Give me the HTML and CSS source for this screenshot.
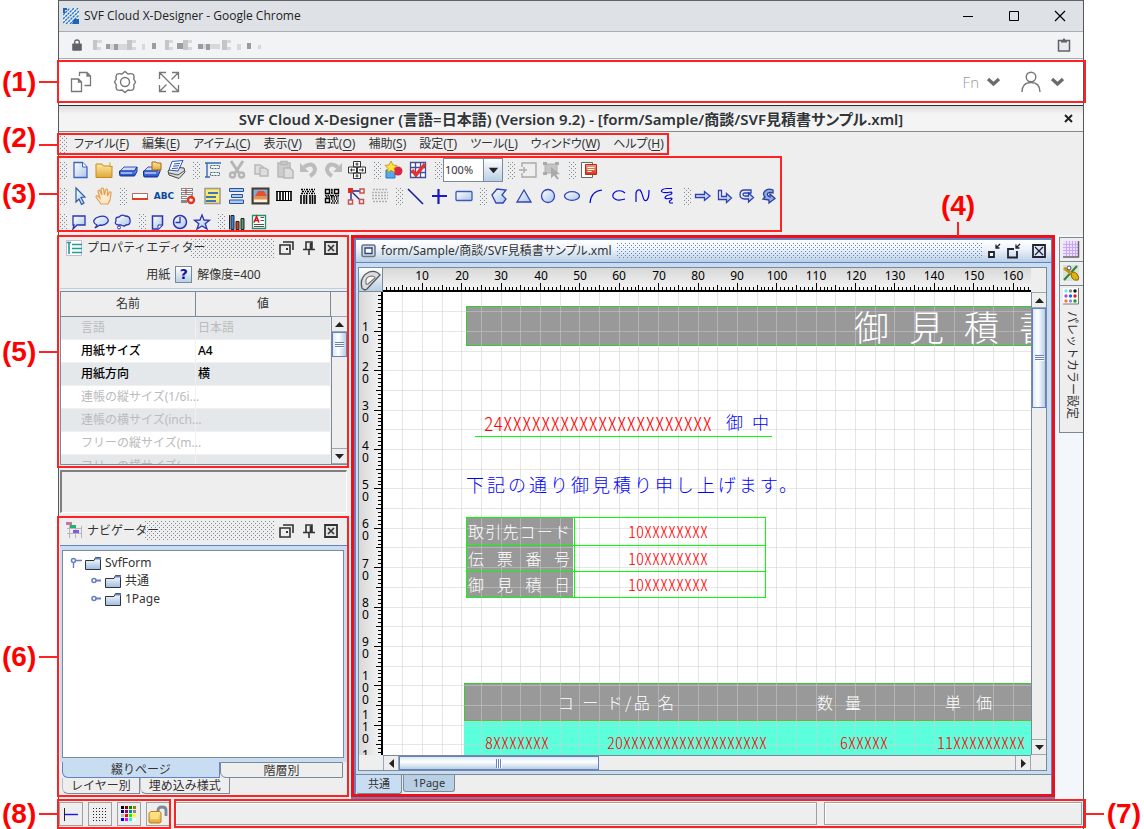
FILE: index.html
```html
<!DOCTYPE html>
<html lang="ja">
<head>
<meta charset="utf-8">
<title>SVF Cloud X-Designer</title>
<link rel="stylesheet" href="styles.css">
</head>
<body>
<svg class="defs" width="0" height="0" aria-hidden="true">
  <defs>
    <linearGradient id="gBlue" x1="0" y1="0" x2="1" y2="1"><stop offset="0" stop-color="#fff"/><stop offset="1" stop-color="#a9c6ea"/></linearGradient>
    <linearGradient id="gGold" x1="0" y1="0" x2="0" y2="1"><stop offset="0" stop-color="#ffe9a0"/><stop offset="1" stop-color="#e0a83a"/></linearGradient>
    <linearGradient id="gDisk" x1="0" y1="0" x2="0" y2="1"><stop offset="0" stop-color="#9ec2ff"/><stop offset="1" stop-color="#1d49c4"/></linearGradient>
    <linearGradient id="gRed" x1="0" y1="0" x2="0" y2="1"><stop offset="0" stop-color="#f79a7c"/><stop offset="1" stop-color="#cf3418"/></linearGradient>
    <linearGradient id="gFolder" x1="0" y1="0" x2="0" y2="1"><stop offset="0" stop-color="#fff"/><stop offset="1" stop-color="#9dbde0"/></linearGradient>
    <symbol id="folder" viewBox="0 0 16 13"><path d="M.5 3.500h8.500l1.500-3h5v12h-15z" fill="url(#gFolder)" stroke="#333"/><path d="M9.500 2.500l1.500-2h5v2z" fill="#6382bf"/></symbol>
    <symbol id="float" viewBox="0 0 15 14"><path d="M1 4h10v9H1zM4 1h10v8" fill="none" stroke="#333" stroke-width="1.600"/><path d="M7 7h2v2H7z" fill="#333"/></symbol>
    <symbol id="pin" viewBox="0 0 12 14"><path d="M3 8V1h6v7M0 8.500h12M6 9v5M7.500 2v6" fill="none" stroke="#333" stroke-width="1.600"/></symbol>
    <symbol id="shut" viewBox="0 0 14 14"><path d="M1 1h12v12H1z" fill="#e4e4e4" stroke="#333" stroke-width="1.800"/><path d="M4 4l6 6M10 4l-6 6" stroke="#333" stroke-width="1.600"/></symbol>
  </defs>
</svg>

<div class="figure">
<div class="window">

  <div class="titlebar">
    <svg width="16" height="16" viewBox="0 0 16 16"><path fill="#e8f0f8" d="M0 0h16v16H0z"/><path stroke="#2f74bd" stroke-width="1.400" stroke-dasharray="2.500 .7" d="M0 3L3 0M0 7L7 0M0 11L11 0M0 15L15 0M3 16L16 3M7 16l9-9M11 16l5-5"/><path fill="#2065b5" d="M0 0h4v2H2v3H0zM11 11h5v5h-7z"/></svg>
    <span class="titlebar-text">SVF Cloud X-Designer - Google Chrome</span>
    <button aria-label="最小化"><svg width="12" height="12"><path d="M1 6.500h10" stroke="#000"/></svg></button>
    <button aria-label="最大化"><svg width="12" height="12"><path d="M1.500 1.500h9v9h-9z" fill="none" stroke="#000"/></svg></button>
    <button aria-label="閉じる"><svg width="12" height="12"><path d="M1 1l10 10M11 1L1 11" stroke="#000" stroke-width="1.200"/></svg></button>
  </div>

  <div class="address">
    <svg width="10" height="12" viewBox="0 0 10 12"><path fill="#5f6368" d="M1 4.500h8q.8 0 .8.800V11q0 .8-.8.800H1q-.8 0-.8-.8V5.300q0-.8.800-.8z"/><path d="M2.700 5V3q0-2 2.300-2t2.300 2v2" fill="none" stroke="#5f6368" stroke-width="1.300"/></svg>
    <svg class="mosaic" width="170" height="12" viewBox="0 0 170 12"><g fill="#c4c6c8"><path d="M0 1h4v10H0zM34 1h5v10h-5zM72 1h4v10h-4zM90 1h5v10h-5zM129 1h5v10h-5z"/></g><g fill="#9a9da0"><path d="M13 5h4v5h-4zM21 5h4v6h-4zM59 4h4v6h-4zM84 4h6v6h-6zM105 5h5v5h-5zM113 5h4v6h-4zM154 4h4v6h-4z"/></g><g fill="#d6d8da"><path d="M4 1h5v3H4zM4 8h4v3H4zM17 5h4v6h-4zM25 5h9v6h-9zM39 1h4v3h-4zM39 8h4v3h-4zM49 5h3v6h-3zM76 1h4v3h-4zM76 8h4v3h-4zM95 1h4v3h-4zM95 8h4v3h-4zM110 5h3v5h-3zM117 5h10v5h-10zM134 1h4v3h-4zM134 8h4v3h-4zM144 5h4v6h-4zM165 6h3v4h-3z"/></g></svg>
    <svg class="address-end" width="14" height="14" viewBox="0 0 14 14"><path d="M1.500 2.500h11v10.500h-11z" fill="#e8eaeb" stroke="#5f6368" stroke-width="1.500"/><path fill="#5f6368" d="M4 2h1.700q.3-1.700 1.300-1.700T8.300 2H10v2.500H4z"/></svg>
  </div>

  <header class="apphead">
    <button aria-label="新規"><svg width="22" height="22" viewBox="0 0 22 22" fill="none" stroke="#777" stroke-width="1.300"><path d="M1.500 8h7l3 3v9.500h-10zM8.500 8v3h3M9.500 5V1.500h7.500l3.500 3.500v9.500h-6M17 1.500V5h3.500"/></svg></button>
    <button aria-label="設定"><svg width="24" height="24" viewBox="0 0 24 24" fill="none" stroke="#777" stroke-width="1.400"><path d="M12 1.500l3 2.500q3.500-1 5.500.5 1 2 .2 4.500L22.500 12l-1.800 3q1 2.500-.4 4.500-2 1.500-5.300.5l-3 2.500-3-2.500q-3.500 1-5.300-.5-1.300-2-.4-4.500L1.500 12l1.800-3q-.8-2.500.4-4.500Q5.500 3 9 4z"/><circle cx="12" cy="12" r="4.500"/></svg></button>
    <button aria-label="全画面"><svg width="22" height="22" viewBox="0 0 22 22" fill="none" stroke="#777" stroke-width="1.300"><path d="M1.500 8V1.500H8M1.500 1.500l7 7M14 1.500h6.500V8M20.500 1.500l-7 7M1.500 14v6.500H8M1.500 20.500l7-7M14 20.500h6.500V14M20.500 20.500l-19-19"/></svg></button>
    <button class="apphead-fn">Fn <svg width="15" height="10" viewBox="0 0 15 10"><path d="M2 2l5.500 5L13 2" fill="none" stroke="#6b6b6b" stroke-width="3.200"/></svg></button>
    <button class="apphead-user" aria-label="ユーザー"><svg width="20" height="22" viewBox="0 0 20 22" fill="none" stroke="#777" stroke-width="1.400"><circle cx="10" cy="6" r="4.800"/><path d="M1 21q0-9.500 9-9.500T19 21"/></svg><svg width="15" height="10" viewBox="0 0 15 10"><path d="M2 2l5.500 5L13 2" fill="none" stroke="#6b6b6b" stroke-width="3.200"/></svg></button>
    <span class="mark mark-head"><span class="mark-label">(1)</span></span>
  </header>

  <div class="apptitle">
    <h1>SVF Cloud X-Designer (言語=日本語) (Version 9.2) - [form/Sample/商談/SVF見積書サンプル.xml]</h1>
    <button aria-label="閉じる"><svg width="9" height="9"><path d="M1 1l7 7M8 1L1 8" stroke="#222" stroke-width="2"/></svg></button>
  </div>

  <nav class="menubar">
    <span class="grip"></span>
    <button>ファイル(<u>F</u>)</button><button>編集(<u>E</u>)</button><button>アイテム(<u>C</u>)</button><button>表示(<u>V</u>)</button><button>書式(<u>O</u>)</button><button>補助(<u>S</u>)</button><button>設定(<u>T</u>)</button><button>ツール(<u>L</u>)</button><button>ウィンドウ(<u>W</u>)</button><button>ヘルプ(<u>H</u>)</button>
    <span class="mark"><span class="mark-label mark-label-raised">(2)</span></span>
  </nav>

  <div class="tools">
    <div class="toolrow">
      <div class="toolgroup"><span class="grip"></span>
        <button aria-label="新規"><svg viewBox="0 0 20 20"><path d="M4 2.500h8.500L17 7v10.500H4z" fill="url(#gBlue)" stroke="#3f63c4" stroke-width="1.300"/><path d="M12.500 2.500V7H17" fill="#fff" stroke="#3f63c4"/></svg></button>
        <button aria-label="開く"><svg viewBox="0 0 20 20"><path d="M2 17.500V4h6l1.500 2H18v11.500z" fill="url(#gGold)" stroke="#c58b22"/><path d="M16 2.500v4h2.500" fill="#fff3c0" stroke="#c58b22" stroke-width=".8"/></svg></button>
        <button aria-label="保存"><svg viewBox="0 0 20 20"><path d="M2 11l4-4h13l-2.500 4z" fill="#c9dcff" stroke="#16309a" stroke-width=".8"/><path d="M1.500 11h15l2.500-4v4.500L16.500 16H3q-1.500 0-1.500-1.500z" fill="url(#gDisk)" stroke="#16309a"/><path d="M3 13h11" stroke="#dfeaff"/></svg></button>
        <button aria-label="フォルダーへ保存"><svg viewBox="0 0 20 20"><path d="M2 11l4-4h12l-2.500 4z" fill="#c9dcff" stroke="#16309a" stroke-width=".8"/><path d="M1.500 11h14l2.500-4v4.500L15.500 17H3q-1.500 0-1.500-1.500z" fill="url(#gDisk)" stroke="#16309a"/><path d="M3 13h11" stroke="#dfeaff"/><path d="M10 2h4l1 1h4v7h-9z" fill="url(#gGold)" stroke="#a06a10"/></svg></button>
        <button aria-label="印刷"><svg viewBox="0 0 20 20"><path d="M2 11l4-4 12 1 1 4-6 6.500L3 15z" fill="#ddd" stroke="#444"/><path d="M6 1.500l11-1L12 11l-9-1z" fill="#fff" stroke="#2b50b8"/><path d="M8 4l6-.6M7 6.200l6-.5M6 8.500l6-.4" stroke="#2b50b8"/><path d="M3 13l9 2 6-4" fill="none" stroke="#555"/></svg></button>
      </div>
      <div class="toolgroup"><span class="grip"></span>
        <button aria-label="属性"><svg viewBox="0 0 20 20"><path d="M2 3h16M2 17h5M4 3v14" stroke="#3568b8" stroke-width="1.400"/><path d="M7.500 5.500h9v3h-9zM7.500 12.500h9v3h-9z" fill="#fff6c8" stroke="#3568b8" stroke-dasharray="2 1"/></svg></button>
        <button disabled aria-label="切り取り"><svg viewBox="0 0 20 20"><path d="M4 1l8 12M16 1L8 13" stroke="#b5b5b5" stroke-width="3"/><circle cx="5.500" cy="15" r="2.500" fill="none" stroke="#b5b5b5" stroke-width="2.500"/><circle cx="14.500" cy="15" r="2.500" fill="none" stroke="#b5b5b5" stroke-width="2.500"/></svg></button>
        <button disabled aria-label="コピー"><svg viewBox="0 0 20 20" fill="#ddd" stroke="#b8b8b8" stroke-width="1.500"><path d="M4 5h5l3 2v7H4z"/><path d="M9 8h5l3 2v6H9z"/></svg></button>
        <button disabled aria-label="貼り付け"><svg viewBox="0 0 20 20" fill="#ccc" stroke="#b8b8b8" stroke-width="1.500"><path d="M3 3h12v14H3z"/><path d="M6 1.500h6v3H6z"/><path d="M9 8h6l3 3v7H9z" fill="#ddd"/></svg></button>
        <button disabled aria-label="元に戻す"><svg viewBox="0 0 20 20"><path d="M5 7q9-6 11 2 0 4-5 7" fill="none" stroke="#bcbcbc" stroke-width="4"/><path d="M1 3v9h9z" fill="#bcbcbc"/></svg></button>
        <button disabled aria-label="やり直し"><svg viewBox="0 0 20 20"><path d="M15 7Q6 1 4 9q0 4 5 7" fill="none" stroke="#bcbcbc" stroke-width="4"/><path d="M19 3v9h-9z" fill="#bcbcbc"/></svg></button>
        <button aria-label="位置移動"><svg viewBox="0 0 20 20" fill="#fff" stroke="#333"><path d="M6.500 1.500h7v5.500h-7zM6.500 13h7v5.500h-7zM1.500 7h8v6h-8zM10.500 7h8v6h-8z"/><path d="M10 2.500v3.500M8.500 4h3M10 14v3.500M8.500 16h3M3 10h5M12 10h5M4.500 8.500v3M15.500 8.500v3" fill="none"/></svg></button>
      </div>
      <div class="toolgroup"><span class="grip"></span>
        <button aria-label="図形"><svg viewBox="0 0 20 20"><path d="M2 10h9v8H2z" fill="#58a8f0" stroke="#2472c4"/><circle cx="14" cy="11" r="4.500" fill="#d82848"/><path d="M7 1l2 4 4 .4-3 3 1 4-4-2-4 2 1-4-3-3L5 5z" fill="#ffe23c" stroke="#b98e14" stroke-width=".8"/></svg></button>
        <button aria-label="グリッド"><svg viewBox="0 0 20 20"><path d="M2.500 2.500h15v15h-15zM7.500 2.500v15M12.500 2.500v15M2.500 7.500h15M2.500 12.500h15" fill="#fff" stroke="#3f4f9c" stroke-width="1.300"/><path d="M4 10l4 5 9-11" fill="none" stroke="#e83030" stroke-width="3.500"/></svg></button>
      </div>
      <div class="toolgroup"><span class="grip"></span>
        <div class="zoom"><select aria-label="表示倍率"><option>100%</option></select><svg width="19" height="23" viewBox="0 0 19 23"><path d="M5 9h10l-5 6z" fill="#222"/></svg></div>
      </div>
      <div class="toolgroup"><span class="grip"></span>
        <button disabled aria-label="整列"><svg viewBox="0 0 20 20" fill="none" stroke="#aaa" stroke-width="1.400"><path d="M4 7V3h14v14H4v-4" /><path d="M1 10h8M6 7v6" /></svg></button>
        <button disabled aria-label="選択"><svg viewBox="0 0 20 20"><path d="M3 4h12v9H3z" fill="#c4c4c4" stroke="#b0b0b0"/><path d="M1 2h4v3H1zM13 2h4v3h-4zM1 12h4v3H1z" fill="#aaa"/><path d="M9 7l9 7-4 .5 3 4-2 1-3-4-3 3z" fill="#aaa"/></svg></button>
      </div>
      <div class="toolgroup"><span class="grip"></span>
        <button aria-label="サブフォーム"><svg viewBox="0 0 20 20"><path d="M2.500 2.500h11v15h-11z" fill="#fff" stroke="#666"/><path d="M6.500 4.500h11v10h-11z" fill="url(#gRed)" stroke="#b42e14"/><path d="M8.500 7.500h7M8.500 9.500h7M8.500 11.500h4" stroke="#fff"/></svg></button>
      </div>
    </div>

    <div class="toolrow toolrow-mid">
      <div class="toolgroup"><span class="grip"></span>
        <button aria-label="選択"><svg viewBox="0 0 20 20"><path d="M6 2l9 9-4 .5 3 5.500-2.500 1.500L9 13l-3 3z" fill="url(#gBlue)" stroke="#2a5da8" stroke-width="1.200"/></svg></button>
        <button aria-label="手のひら"><svg viewBox="0 0 20 20"><path d="M7 18L2 11q0-2 2-1l2 2-2-7q1-2 2 0l2 4-1-6q1.500-2 2.500 0l1 6 1-5q1.500-2 2 0v6l2-4q2-.5 1.500 1.500L16 14l-2 4z" fill="#ffe9cc" stroke="#e0a050" stroke-width="1.200"/></svg></button>
      </div>
      <div class="toolgroup"><span class="grip"></span>
        <button aria-label="フィールド"><svg viewBox="0 0 20 20"><path d="M2.500 7.500h15v5h-15z" fill="#fff" stroke="#a87060"/><path d="M2 13h16" stroke="#e04020" stroke-width="2"/></svg></button>
        <button class="tool-text" aria-label="固定文字">ABC</button>
        <button aria-label="リンク"><svg viewBox="0 0 20 20"><path d="M3 3.500h12M3 7.500h12M3 11.500h6M3 15.500h6" stroke="#888" stroke-width="3"/><path d="M4 3.500h10M4 7.500h10M4 11.500h5" stroke="#fff"/><path d="M8 3v5M14 9v4" stroke="#d82818"/><circle cx="13" cy="14" r="3" fill="none" stroke="#e03820" stroke-width="2.400"/></svg></button>
        <button aria-label="サブフォーム"><svg viewBox="0 0 20 20"><path d="M3 2.500h15v15H3z" fill="#ffe96a" stroke="#999" stroke-width="1.500"/><path d="M6 7h10M4 11h10M4 15h10" stroke="#3a78b8" stroke-width="2"/></svg></button>
        <button aria-label="レコード"><svg viewBox="0 0 20 20" fill="#a9cbf2" stroke="#2c4f9c"><path d="M3.500 2.500h14v3h-14zM5.500 8.500h11v3h-11zM3.500 14h14v3.500h-14z"/></svg></button>
        <button aria-label="イメージ"><svg viewBox="0 0 20 20"><path d="M2.500 2.500h16v15h-16z" fill="#79aee8" stroke="#4c3a28" stroke-width="2"/><path d="M5 10l3-5h6l3 5z" fill="#e8502c"/><path d="M4 10.500h13v3H4z" fill="#ff8a30"/><path d="M4 13.500h13v2.500H4z" fill="#fff2dc"/></svg></button>
        <button aria-label="バーコード"><svg viewBox="0 0 20 20"><path d="M2 5h16v10H2z" fill="#fff"/><path d="M3 6v8M6 6v8M9 6v8M17 6v8" stroke="#000" stroke-width="1.600"/><path d="M11.500 6v8M14.500 6v8" stroke="#000"/><path d="M2 5.500h16M2 14.500h16" stroke="#000"/></svg></button>
        <button aria-label="二次元コード"><svg viewBox="0 0 20 20" stroke="#000"><path d="M3 9v9M6 9v9M8.500 9v9M12 9v9M14.500 9v9M17 9v9" stroke-width="1.600"/><path d="M3 3.500h14M4 5.500h12M3 7.500h14" stroke-dasharray="2 1 1 1" stroke-width="1.500" fill="none"/></svg></button>
        <button aria-label="QRコード"><svg viewBox="0 0 20 20" fill="none" stroke="#000"><path d="M3.500 3.500h4v4h-4zM12.500 3.500h4v4h-4zM3.500 12.500h4v4h-4z" stroke-width="1.400"/><path d="M9 3.500h2M9 6.500h2M3 9.500h14M4 11h13M9 13h8M10 15h7M9 17h8M10 4v8" stroke-dasharray="1.500 1" stroke-width="1.400"/></svg></button>
        <button aria-label="グループ"><svg viewBox="0 0 20 20"><path d="M5 5h12M5 5v12M5 5l10 10" stroke="#1d2690" stroke-width="1.400"/><path d="M2 2h5v5H2z" fill="#e82c14"/><path d="M15 7h3v0M2.500 14h4v4h-4zM13.500 13.500h4v4h-4zM14 3h4v4h-4z" fill="#fff" stroke="#c85050" stroke-width="1.500"/></svg></button>
        <button disabled aria-label="網掛け"><svg viewBox="0 0 20 20" stroke="#b2b2b2" stroke-width="1.500" stroke-dasharray="2 1"><path d="M3 3.500h14M2 6.500h16M2 9.500h16M2 12.500h16M3 15.500h14"/></svg></button>
      </div>
      <div class="toolgroup"><span class="grip"></span>
        <button aria-label="直線"><svg viewBox="0 0 20 20"><path d="M2 3l15 15" stroke="#1a1aa8" stroke-width="1.600"/></svg></button>
        <button aria-label="十字線"><svg viewBox="0 0 20 20"><path d="M2 10h15M8.500 3v15" stroke="#1a1ac8" stroke-width="2.200"/></svg></button>
        <button aria-label="矩形"><svg viewBox="0 0 20 20"><rect x="2" y="5.500" width="16" height="9" rx="1" fill="url(#gBlue)" stroke="#4058b4" stroke-width="1.300"/></svg></button>
      </div>
      <div class="toolgroup"><span class="grip"></span>
        <button aria-label="多角形"><svg viewBox="0 0 20 20"><path d="M2 9l5-6 9 1-4 5 4 4-3 4H6z" fill="url(#gBlue)" stroke="#3344b4" stroke-width="1.300"/></svg></button>
        <button aria-label="三角形"><svg viewBox="0 0 20 20"><path d="M10 4l7 12H3z" fill="url(#gBlue)" stroke="#3344b4" stroke-width="1.300"/></svg></button>
        <button aria-label="円"><svg viewBox="0 0 20 20"><circle cx="10" cy="10" r="6.500" fill="url(#gBlue)" stroke="#3344b4" stroke-width="1.300"/></svg></button>
        <button aria-label="楕円"><svg viewBox="0 0 20 20"><ellipse cx="10" cy="10" rx="7.500" ry="4.300" fill="url(#gBlue)" stroke="#3344b4" stroke-width="1.300"/></svg></button>
        <button aria-label="円弧"><svg viewBox="0 0 20 20"><path d="M4 17Q5 5 16 4" fill="none" stroke="#0000e0" stroke-width="1.200"/></svg></button>
        <button aria-label="楕円弧"><svg viewBox="0 0 20 20"><path d="M15 7Q12 4 7 5 2 7 3 11q3 5 12 2" fill="none" stroke="#0000e0" stroke-width="1.200"/></svg></button>
        <button aria-label="曲線"><svg viewBox="0 0 20 20"><path d="M2 16V7q1-4 4-3 2 2 3 7 1 5 4 3 2-2 2-10" fill="none" stroke="#0000e0" stroke-width="1.200"/></svg></button>
        <button aria-label="フリーハンド"><svg viewBox="0 0 20 20"><path d="M14 2.500H9Q3 3 3.500 5.500 5 7.500 13 6q2 1-.5 2.500Q7 9.500 7 12q2 1.500 6 0 2 .5 0 2-2.500 1-1 3h3" fill="none" stroke="#0000e0" stroke-width="1.200"/></svg></button>
      </div>
      <div class="toolgroup toolgroup-tight"><span class="grip"></span>
        <button aria-label="矢印"><svg viewBox="0 0 20 20"><path d="M2.500 8.500h9V5.500l5.500 4.500-5.500 4.500v-3h-9z" fill="url(#gBlue)" stroke="#3040b0" stroke-width="1.300"/></svg></button>
        <button aria-label="折れ矢印"><svg viewBox="0 0 20 20"><path d="M3.500 4.500h3v6h5V7.500l5 4.500-5 4.500v-3h-8z" fill="url(#gBlue)" stroke="#3040b0" stroke-width="1.300"/></svg></button>
        <button aria-label="曲がり矢印"><svg viewBox="0 0 20 20"><path d="M14 4H7.500Q3 4 3 8.500T7.500 13h4v3l5-4.500-5-4.500v3H8Q6 10 6 8.500T8 7h6z" fill="url(#gBlue)" stroke="#3040b0" stroke-width="1.300"/></svg></button>
        <button aria-label="回転矢印"><svg viewBox="0 0 20 20"><path d="M14 4Q9 2 6 5q-3 3 0 6l-2 2 6 1v3l6-4.500L11 8v3q-4-2-2-4 2-1 5 0z" fill="#8fb0dc" stroke="#2c3ca4" stroke-width="1.300"/></svg></button>
      </div>
    </div>

    <div class="toolrow toolrow-low">
      <div class="toolgroup toolgroup-tight"><span class="grip"></span>
        <button aria-label="四角吹き出し"><svg viewBox="0 0 20 20"><path d="M4 4h12v9H8l-4 4 1-4H4z" fill="url(#gBlue)" stroke="#2c34b0" stroke-width="1.300"/></svg></button>
        <button aria-label="楕円吹き出し"><svg viewBox="0 0 20 20"><path d="M6 13Q0 10 5 6q6-3 10-1 4 3 1 6-3 3-7 2l-5 3z" fill="url(#gBlue)" stroke="#2c34b0" stroke-width="1.300"/></svg></button>
        <button aria-label="雲吹き出し"><svg viewBox="0 0 20 20"><path d="M5 13Q1 12 3 9 2 5 6 5q3-3 6-1 5 0 5 4 1 5-4 5-2 2-5 0z" fill="url(#gBlue)" stroke="#2c34b0" stroke-width="1.300"/><circle cx="6" cy="15.500" r="1.500" fill="#fff" stroke="#2c34b0"/></svg></button>
      </div>
      <div class="toolgroup toolgroup-tight"><span class="grip"></span>
        <button aria-label="付箋"><svg viewBox="0 0 20 20"><path d="M4.500 4h10v9l-4 4h-6z" fill="url(#gBlue)" stroke="#2c34b0" stroke-width="1.500"/><path d="M14 13h-4v4" fill="#fff" stroke="#2c34b0"/></svg></button>
        <button aria-label="時計"><svg viewBox="0 0 20 20"><circle cx="10" cy="10" r="6.500" fill="url(#gBlue)" stroke="#2c34b0" stroke-width="1.500"/><path d="M10 5v5.500H5.500" fill="none" stroke="#2c34b0" stroke-width="1.300"/></svg></button>
        <button aria-label="星"><svg viewBox="0 0 20 20"><path d="M10 3l2 5 5.500.3-4.300 3.500 1.800 5.200-5-3-5 3 1.800-5.200L2.500 8.300 8 8z" fill="url(#gBlue)" stroke="#2c34b0" stroke-width="1.300"/></svg></button>
      </div>
      <div class="toolgroup toolgroup-tight"><span class="grip"></span>
        <button aria-label="グラフ"><svg viewBox="0 0 20 20" stroke="#222"><path d="M2.500 3v14.500" /><path d="M4 3.500h3v14H4z" fill="#3e7fd8"/><path d="M9 9.500h3v8H9z" fill="#d83c2c"/><path d="M14 6.500h3v11h-3z" fill="#4c9c5c"/></svg></button>
        <button aria-label="リッチテキスト"><svg viewBox="0 0 20 20"><path d="M3.500 3.500h13v13h-13z" fill="#fff" stroke="#2c8c6c" stroke-width="1.300"/><path d="M5 10.500l2.500-6 2.500 6M6 8.500h3" fill="none" stroke="#d01818" stroke-width="1.600"/><path d="M11.500 5.500h3.500M11.500 8.500h3.500M5 12.500h10M5 14.500h10" stroke="#555"/></svg></button>
      </div>
    </div>
    <span class="mark mark-tools"><span class="mark-label">(3)</span></span>
  </div>

  <main class="main">
    <div class="side">
      <section class="panel">
        <div class="panel-head">
          <svg width="17" height="17" viewBox="0 0 17 17"><path d="M.5.500h15v15H.5z" fill="#fff" stroke="#c9b8d8"/><path d="M3 3v11M1 2.500h4M6 4.500h10M6 8.500h10M6 12.500h10" stroke="#18a090" stroke-width="1.600"/></svg>
          <h2>プロパティエディター</h2><span class="dots"></span>
          <button aria-label="フロート"><svg width="15" height="14"><use href="#float"/></svg></button>
          <button aria-label="固定"><svg width="12" height="14"><use href="#pin"/></svg></button>
          <button aria-label="閉じる"><svg width="14" height="14"><use href="#shut"/></svg></button>
        </div>
        <div class="panel-sub">用紙 <button class="help" aria-label="ヘルプ">?</button> 解像度=400</div>
        <div class="props">
          <div class="props-table">
            <table>
              <thead><tr><th>名前</th><th>値</th></tr></thead>
              <tbody>
                <tr><td>言語</td><td>日本語</td></tr>
                <tr class="on"><td>用紙サイズ</td><td>A4</td></tr>
                <tr class="on"><td>用紙方向</td><td>横</td></tr>
                <tr><td>連帳の縦サイズ(1/6i...</td><td></td></tr>
                <tr><td>連帳の横サイズ(inch...</td><td></td></tr>
                <tr><td>フリーの縦サイズ(m...</td><td></td></tr>
                <tr><td>フリーの横サイズ(...</td><td></td></tr>
              </tbody>
            </table>
          </div>
          <div class="props-scroll">
            <div class="scroll-v">
              <button aria-label="上へ"><svg width="9" height="5"><path d="M0 5l4.500-5L9 5z" fill="#222"/></svg></button>
              <span class="thumb thumb-short"></span><span class="track"></span>
              <button aria-label="下へ"><svg width="9" height="5"><path d="M0 0l4.500 5L9 0z" fill="#222"/></svg></button>
            </div>
          </div>
        </div>
        <span class="mark"><span class="mark-label">(5)</span></span>
      </section>

      <div class="message"></div>

      <section class="panel panel-nav">
        <div class="panel-head panel-head-tall">
          <svg width="17" height="17" viewBox="0 0 17 17"><path d="M1 6.500h15M1 11.500h15M3.500 2v14M9.500 4v12M15.500 4v12" stroke="#b4b4c8" fill="none"/><path fill="#d070a0" d="M0 0h6v3H0z"/><path fill="#18b868" d="M4 3h6v3H4z"/><path fill="#8858d8" d="M7 8h6v3H7z"/></svg>
          <h2>ナビゲーター</h2><span class="dots"></span>
          <button aria-label="フロート"><svg width="15" height="14"><use href="#float"/></svg></button>
          <button aria-label="固定"><svg width="12" height="14"><use href="#pin"/></svg></button>
          <button aria-label="閉じる"><svg width="14" height="14"><use href="#shut"/></svg></button>
        </div>
        <div class="nav-body">
          <ul class="tree">
            <li><span class="node"><svg width="13" height="13" viewBox="0 0 13 13"><path d="M3.500 5v6M6 3.500h6" stroke="#6382bf" stroke-width="1.400"/><circle cx="3.500" cy="3.500" r="2" fill="#fff" stroke="#6382bf" stroke-width="1.600"/></svg><svg width="16" height="13"><use href="#folder"/></svg>SvfForm</span>
              <ul>
                <li><span class="node"><svg width="13" height="13" viewBox="0 0 13 13"><path d="M6 5.500h5" stroke="#6382bf" stroke-width="2"/><circle cx="4" cy="5.500" r="2" fill="#fff" stroke="#6382bf" stroke-width="1.600"/></svg><svg width="16" height="13"><use href="#folder"/></svg>共通</span></li>
                <li><span class="node"><svg width="13" height="13" viewBox="0 0 13 13"><path d="M6 5.500h5" stroke="#6382bf" stroke-width="2"/><circle cx="4" cy="5.500" r="2" fill="#fff" stroke="#6382bf" stroke-width="1.600"/></svg><svg width="16" height="13"><use href="#folder"/></svg>1Page</span></li>
              </ul>
            </li>
          </ul>
        </div>
        <div class="nav-tabs"><button class="tab tab-a tab-on">綴りページ</button><button class="tab tab-b">階層別</button></div>
        <div class="nav-tabs nav-tabs-low"><button class="tab">レイヤー別</button><button class="tab">埋め込み様式</button></div>
        <span class="mark"><span class="mark-label">(6)</span></span>
      </section>
    </div>

    <section class="doc">
      <div class="doc-title">
        <svg width="15" height="14" viewBox="0 0 15 14"><rect x="1" y="1" width="13" height="11.500" rx="1.500" fill="#cfdcea" stroke="#6a7688" stroke-width="1.600"/><path d="M4 4h7v5.500H4z" fill="#fff" stroke="#2c4478" stroke-width="1.300"/></svg>
        <h2>form/Sample/商談/SVF見積書サンプル.xml</h2><span class="dots dots-blue"></span>
        <button aria-label="最小化"><svg width="14" height="16" viewBox="0 0 14 16"><path d="M2 9h5v5H2z" fill="#fff" stroke="#223" stroke-width="1.800"/><path d="M13 1L9.500 4.500M9 1.500V5h3.500" fill="none" stroke="#223" stroke-width="1.300"/></svg></button>
        <button aria-label="最大化"><svg width="15" height="16" viewBox="0 0 15 16"><path d="M8 6H2v8.500h9V8" fill="none" stroke="#223" stroke-width="1.800"/><path d="M14 1l-3.500 3.500M10 1.500V5h3.500" fill="none" stroke="#223" stroke-width="1.300"/></svg></button>
        <button class="doc-close" aria-label="閉じる"><svg width="14" height="14" viewBox="0 0 14 14"><path d="M1 1h12v12H1z" fill="#dce8f5" stroke="#223" stroke-width="1.800"/><path d="M3 3l8 8M11 3l-8 8" stroke="#223" stroke-width="1.300"/></svg></button>
      </div>
      <div class="doc-frame">
        <div class="doc-grid">
          <button class="corner" aria-label="単位"><svg width="22" height="22" viewBox="0 0 22 22"><path d="M2 19Q-1 8 9 3q7-2 11 3L7 20q-3 2-5-1z" fill="#dcdcdc" stroke="#555" stroke-width="1.300"/><path d="M6 14Q5 8 11 7q4 0 4 2l-7 6q-2 1-2-1z" fill="#f8f8f8" stroke="#777" stroke-width="1.200"/></svg></button>
          <div class="ruler ruler-x" id="rulerX"></div>
          <div class="ruler-end"></div>
          <div class="ruler ruler-y" id="rulerY"></div>
          <div class="canvas">
            <div class="shape band"></div>
            <div class="shape head-row"></div>
            <div class="shape detail-row"></div>
            <div class="shape cell-fill"></div>
            <svg class="gridlines" id="grid" aria-hidden="true"></svg>
            <div class="shape rules"><div class="rule-row rule-row-first"></div><div class="rule-row"></div><div class="rule-row"></div></div>
            <div class="shape underline"></div>
            <p class="ft title">御 見 積 書</p>
            <p class="fd client">24XXXXXXXXXXXXXXXXXXXXXX</p>
            <p class="ft onchu">御 中</p>
            <p class="ft lead">下記の通り御見積り申し上げます。</p>
            <p class="ft lab lab-1">取引先コード</p>
            <p class="ft lab lab-2">伝 票 番 号</p>
            <p class="ft lab lab-3">御 見 積 日</p>
            <p class="fd val val-1">10XXXXXXXX</p>
            <p class="fd val val-2">10XXXXXXXX</p>
            <p class="fd val val-3">10XXXXXXXX</p>
            <p class="ft col col-1">コ ー ド/品 名</p>
            <p class="ft col col-2">数 量</p>
            <p class="ft col col-3">単 価</p>
            <p class="fd det det-1">8XXXXXXX</p>
            <p class="fd det det-2">20XXXXXXXXXXXXXXXXXX</p>
            <p class="fd det det-3">6XXXXX</p>
            <p class="fd det det-4">11XXXXXXXXX</p>
          </div>
          <div class="scroll-v">
            <button aria-label="上へ"><svg width="9" height="5"><path d="M0 5l4.500-5L9 5z" fill="#222"/></svg></button>
            <span class="thumb thumb-long"></span><span class="track"></span>
            <button aria-label="下へ"><svg width="9" height="5"><path d="M0 0l4.500 5L9 0z" fill="#222"/></svg></button>
          </div>
          <div class="scroll-gap"></div>
          <div class="scroll-h">
            <button aria-label="左へ"><svg width="5" height="9"><path d="M5 0L0 4.500 5 9z" fill="#222"/></svg></button>
            <span class="thumb thumb-wide"></span><span class="track"></span>
            <button aria-label="右へ"><svg width="5" height="9"><path d="M0 0l5 4.500L0 9z" fill="#222"/></svg></button>
          </div>
          <div class="scroll-gap"></div>
        </div>
      </div>
      <div class="doc-tabs"><button class="doc-tab doc-tab-on">共通</button><button class="doc-tab">1Page</button></div>
      <span class="mark mark-doc"><span class="mark-label mark-label-top">(4)</span></span>
    </section>

    <aside class="palette">
      <button aria-label="グリッド設定"><svg width="17" height="17" viewBox="0 0 17 17"><path fill="#eee0ff" d="M0 0h16v16H0z"/><path d="M3.500 0v16M6.500 0v16M9.500 0v16M12.500 0v16M0 3.500h16M0 6.500h16M0 9.500h16M0 12.500h16" stroke="#c8a8f4"/><path d="M15.500 0v16H0" fill="none" stroke="#666" stroke-width="1.500"/></svg></button>
      <button aria-label="描画設定"><svg width="17" height="17" viewBox="0 0 17 17"><path fill="#d4e6d4" d="M0 0h16v16H0z"/><path d="M1 15L14 1" stroke="#3c7c44" stroke-width="2"/><path d="M1 3l8 6" stroke="#c8960c" stroke-width="3"/><path d="M8 9q3-4 6 0 3 4 1 6-4 1-6-2z" fill="#e0b010" stroke="#8c6808"/><circle cx="6" cy="3" r="2" fill="#fff" stroke="#448"/></svg></button>
      <button class="palette-long"><svg width="17" height="17" viewBox="0 0 17 17"><path fill="#fff" d="M0 0h16v16H0z"/><path d="M15.500 0v16H0" fill="none" stroke="#777"/><g><circle cx="3" cy="3" r="1.700" fill="#70e8f0"/><circle cx="7.500" cy="3" r="1.700" fill="#888"/><circle cx="12" cy="3" r="1.700" fill="#111"/><circle cx="3" cy="8" r="1.700" fill="#a850e8"/><circle cx="7.500" cy="8" r="1.700" fill="#1070e8"/><circle cx="12" cy="8" r="1.700" fill="#e81818"/><circle cx="3" cy="13" r="1.700" fill="#f88020"/><circle cx="7.500" cy="13" r="1.700" fill="#9088f0"/><circle cx="12" cy="13" r="1.700" fill="#10a010"/></g></svg><span>パレットカラー設定</span></button>
    </aside>
  </main>

  <footer class="status">
    <div class="status-tools">
      <button aria-label="基準線"><svg width="18" height="18"><path d="M2.500 3v13" stroke="#223"/><path d="M3 9.500h13" stroke="#1818e8" stroke-width="1.400"/></svg></button>
      <button aria-label="グリッド"><svg width="18" height="18" stroke="#222" stroke-dasharray="1 2"><path d="M2 3.500h15M2 6.500h15M2 9.500h15M2 12.500h15M2 15.500h15"/></svg></button>
      <button aria-label="カラー"><svg width="16" height="16" viewBox="0 0 16 16"><path fill="#000" d="M0 0h3v3H0z"/><path fill="#800" d="M4 0h3v3H4z"/><path fill="#080" d="M8 0h3v3H8z"/><path fill="#880" d="M12 0h3v3h-3z"/><path fill="#008" d="M0 4h3v3H0z"/><path fill="#808" d="M4 4h3v3H4z"/><path fill="#088" d="M8 4h3v3H8z"/><path fill="#888" d="M12 4h3v3h-3z"/><path fill="#bbb" d="M0 8h3v3H0z"/><path fill="#f00" d="M4 8h3v3H4z"/><path fill="#0f0" d="M8 8h3v3H8z"/><path fill="#ff0" d="M12 8h3v3h-3z"/><path fill="#00f" d="M0 12h3v3H0z"/><path fill="#f0f" d="M4 12h3v3H4z"/><path fill="#0ff" d="M8 12h3v3H8z"/><path fill="#fff" d="M12 12h3v3h-3z"/></svg></button>
      <button aria-label="ロック"><svg width="20" height="20" viewBox="0 0 20 20"><path d="M10 10V6q0-3 4-3t4 3v6" fill="none" stroke="#7c8898" stroke-width="2.800"/><path d="M1 9l2-1.500h9L13 9v9l-1.500 1H2l-1-1z" fill="url(#gGold)" stroke="#c08010"/><path d="M2.500 10h8v5h-8z" fill="#ffe07a"/></svg></button>
      <span class="mark"><span class="mark-label">(8)</span></span>
    </div>
    <div class="status-fields">
      <div class="field field-main"></div><div class="field field-end"></div>
      <span class="mark mark-status"><span class="mark-label mark-label-end">(7)</span></span>
    </div>
  </footer>
</div>
</div>
<script src="ruler.js"></script>
</body>
</html>
```
FILE: styles.css
```css
* { box-sizing: border-box; }
html, body { margin: 0; height: 100%; }
body {
  background: #fff;
  color: #333;
  font: 12px/16px "Noto Sans", "Noto Sans CJK JP", sans-serif;
}
button, select { font: inherit; color: inherit; margin: 0; padding: 0; border: 0; background: none; }
button { display: flex; align-items: center; justify-content: center; white-space: nowrap; }
h1, h2, p, ul { margin: 0; padding: 0; font: inherit; list-style: none; }
svg { display: block; flex: none; }
.defs { position: absolute; }

.figure { min-height: 100%; padding: 0 60px 0 58px; display: flex; }
.window {
  flex: 1; min-width: 0;
  display: flex; flex-direction: column;
  background: #eee;
  border: solid #55585c; border-width: 0 1px;
}

/* Numbered callouts */
.mark { position: absolute; inset: 0 0 0 -2px; border: 2px solid #f22; pointer-events: none; z-index: 5; }
.mark-label {
  position: absolute; right: 100%; top: 50%; width: 57px; height: 32px; margin-top: -16px;
  display: flex; align-items: center; gap: 3px;
  font: bold 28px/32px "Liberation Sans", sans-serif; color: #f00;
}
.mark-label::after { content: ""; flex: 1; height: 2px; background: #f22; }
.mark-label-raised { align-items: flex-end; margin-top: -22px; }
.mark-label-raised::after { margin-bottom: 8px; }
.mark-label-top { right: 75px; top: -48px; width: 38px; height: 46px; margin-top: 0; flex-direction: column; align-items: center; gap: 0; }
.mark-label-top::after { width: 2px; }
.mark-label-end { right: auto; left: 100%; flex-direction: row-reverse; }
.mark-head { inset: 1px -3px 2px -2px; }
.mark-tools { bottom: 3px; }
.mark-doc { inset: -5px -4px -3px -5px; border: 3px solid #e8121c; }
.mark-status { inset: 0 -3px 1px 0; }

/* Browser window */
.titlebar { display: flex; align-items: center; height: 32px; padding-left: 4px; background: #dee1e6; border-top: 1px solid #5f6368; border-bottom: 1px solid #aaaeb3; }
.titlebar-text { flex: 1; margin-left: 5px; font-size: 12px; font-family: "Open Sans", sans-serif; color: #222; }
.titlebar button { width: 46px; height: 30px; }
.address { display: flex; align-items: center; height: 27px; padding: 0 12px 0 13px; background: #f1f3f4; border-bottom: 1px solid #aaaeb3; }
.mosaic { margin-left: 11px; }
.address-end { margin-left: auto; }

.apphead { position: relative; display: flex; align-items: center; gap: 20px; height: 47px; padding: 0 18px 0 10px; background: #fff; border-bottom: 1px solid #2a2e33; }
.apphead button { width: 24px; height: 30px; gap: 7px; }
.apphead .apphead-fn { width: auto; margin-left: auto; font: 300 15px/20px "Open Sans", sans-serif; color: #999; }
.apphead .apphead-user { width: auto; gap: 9px; }

.apptitle { display: flex; align-items: center; height: 26px; padding: 0 10px 0 20px; background: linear-gradient(#dcdcdc, #f4f4f4 8px); border-bottom: 1px solid #888; }
.apptitle h1 { flex: 1; text-align: center; font-size: 15px; line-height: 20px; font-weight: 600; color: #303538; font-feature-settings: "palt"; }
.apptitle button { width: 10px; height: 20px; }

.menubar { position: relative; align-self: flex-start; display: flex; align-items: center; gap: 13px; height: 24px; padding: 0 5px 0 1px; border: solid transparent; border-width: 1px 0; font-size: 12px; font-feature-settings: "palt"; }
.menubar .grip { margin-right: -7px; }
.menubar u { text-underline-offset: 2px; }

/* Toolbars */
.grip, .dots {
  background-image: conic-gradient(from 270deg at 1px 1px, #7d8a98 90deg, transparent 0), conic-gradient(from 270deg at 1px 1px, #7d8a98 90deg, transparent 0);
  background-size: 4px 4px;
  background-position: 0 0, 2px 2px;
}
.grip { flex: none; width: 8px; height: 17px; }
.tools { position: relative; align-self: flex-start; padding: 1px 2px 0 1px; }
.toolrow { display: flex; gap: 5px; height: 26px; }
.toolrow-mid { gap: 4px; }
.toolgroup { display: flex; align-items: center; }
.toolgroup button { width: 24px; height: 24px; }
.toolgroup-tight button { width: 22px; }
.toolgroup button svg { width: 20px; height: 20px; }
.toolgroup .tool-text { font: bold 9px/12px "DejaVu Sans", sans-serif; color: #0a4aa0; }
.zoom { position: relative; width: 60px; height: 24px; border: 1px solid #7a8a99; background: #fff; }
.zoom select { appearance: none; width: 100%; height: 100%; padding-left: 1px; font-size: 11px; }
.zoom svg { position: absolute; right: 0; top: 0; height: 22px; pointer-events: none; background: linear-gradient(#fff, #b8cfe5); border-left: 1px solid #7a8a99; }

/* Work area */
.main { flex: 1; display: grid; grid-template-columns: 290px minmax(0, 1fr) 28px; min-height: 0; }
.side { display: flex; flex-direction: column; padding-bottom: 2px; }
.panel { position: relative; padding: 0 2px 3px 1px; }
.panel-head { display: flex; align-items: center; height: 26px; padding: 0 9px 0 6px; }
.panel-head-tall { height: 29px; }
.panel-head h2 { margin-left: 4px; white-space: nowrap; position: relative; }
.panel-head button { width: 15px; height: 20px; margin-left: 7px; }
.panel-head .dots { flex: 1; height: 19px; margin-left: -14px; }
.panel-head .dots + button { margin-left: 5px; }
.panel-sub { display: flex; align-items: center; justify-content: center; gap: 5px; height: 28px; border-bottom: 1px solid #b8cfe5; }
.help { width: 17px; height: 17px; border: 1px solid #7a8a99; background: linear-gradient(#fff, #b8cfe5); color: #11a; font: bold 14px/15px "DejaVu Sans", sans-serif; }
.props { display: flex; height: 174px; margin-top: 2px; border: solid #7a8a99; border-width: 1px 0 1px 1px; overflow: hidden; }
.props-table { flex: 1; min-width: 0; }
.props table { width: 100%; border-collapse: separate; border-spacing: 0; table-layout: fixed; }
.props th { height: 25px; padding: 0; font-weight: 400; border: solid #7a8a99; border-width: 0 1px 1px 0; }
.props td { height: 23px; padding: 0 0 0 2px; white-space: nowrap; color: #bbb; background: #fff; border: solid #f0f0f0; border-width: 0 1px 1px 0; }
.props td:first-child { padding-left: 20px; }
.props tr:nth-child(odd) td { background: #e4e8eb; }
.props tr.on td { color: #000; font-weight: 500; }
.props-scroll { flex: none; width: 16px; padding-top: 24px; display: flex; flex-direction: column; }
.message { flex: none; height: 43px; margin: 2px 2px 3px 1px; border: solid; border-width: 2px 1px 1px 2px; border-color: #808080 #fff #fff #808080; }
.panel-nav { flex: 1; display: flex; flex-direction: column; }
.nav-body { flex: 1; padding: 4px 3px 4px 2px; background: #c8ddf2; border-top: 1px solid #6382bf; display: flex; }
.tree { flex: 1; padding: 3px 0 0 7px; background: #fff; border: 1px solid #7a8a99; }
.tree ul { padding-left: 20px; }
.node { display: flex; align-items: center; gap: 4px; height: 18px; }
.node svg:first-child { margin-right: -2px; }

.nav-tabs { display: flex; height: 16px; margin: 0 4px 0 2px; }
.tab { height: 16px; padding: 0 8px; border: solid #7a8a99; border-width: 0 1px 1px 1px; border-bottom-left-radius: 6px; line-height: 15px; }
.tab-a { flex: 4; border-color: #6382bf; }
.tab-b { flex: 3; border-top-width: 1px; }
.tab-on { background: #c8ddf2; }
.nav-tabs-low .tab { border-left-color: #b4c0cc; }

/* Scroll bars */
.scroll-v, .scroll-h { flex: 1; display: flex; background: #eee; min-height: 0; }
.scroll-v { flex-direction: column; border-left: 1px solid #7a8a99; }
.scroll-h { border: solid #7a8a99; border-width: 1px 0 0; }
.scroll-v button { flex: none; height: 16px; border: solid #9aa8b5; border-width: 1px 0; }
.scroll-h button { flex: none; width: 16px; border: solid #9aa8b5; border-width: 0 1px; }
.track { flex: 1; }
.thumb { border: 1px solid #6382bf; background: linear-gradient(90deg, #dce8f5, #fff 40%, #b8cfe5); display: flex; align-items: center; justify-content: center; }
.thumb::after { content: ""; width: 9px; height: 6px; background: repeating-linear-gradient(#6382bf 0 1px, #fff 1px 2px); }
.thumb-short { height: 25px; }
.thumb-long { height: 100px; }
.thumb-wide { width: 200px; background: linear-gradient(#dce8f5, #fff 40%, #b8cfe5); }
.thumb-wide::after { width: 6px; height: 9px; background: repeating-linear-gradient(90deg, #6382bf 0 1px, #fff 1px 2px); }

/* Document window */
.doc { position: relative; display: flex; flex-direction: column; margin-left: 2px; border: solid #6d7fc0; border-width: 5px 4px 5px 5px; min-width: 0; min-height: 560px; }
.doc-title { display: flex; align-items: center; height: 23px; padding: 0 5px; background: linear-gradient(#fff, #eef4fa 40%, #b8cfe5); border-bottom: 1px solid #6382bf; }
.doc-title h2 { margin: 0 5px 0 5px; white-space: nowrap; font-feature-settings: "palt"; }
.doc-title .dots { flex: 1; height: 16px; }
.dots-blue { background-image: conic-gradient(from 270deg at 1px 1px, #6382bf 90deg, transparent 0), conic-gradient(from 270deg at 1px 1px, #6382bf 90deg, transparent 0); }
.doc-title button { margin-left: 5px; }
.doc-title .doc-close { margin-left: 11px; }
.doc-frame { flex: 1; display: flex; min-height: 0; padding: 4px 4px 3px 2px; background: #c8ddf2; border-bottom: 1px solid #7a8a99; }
.doc-grid { flex: 1; min-width: 0; display: grid; grid-template: 24px minmax(0, 1fr) 15px / 24px minmax(0, 1fr) 15px; border: 1px solid #7a8a99; background: #eee; }
.corner { background: linear-gradient(#fff, #b8cfe5); border: solid #7a8a99; border-width: 0 1px 1px 0; }
.ruler { position: relative; overflow: hidden; font-size: 12px; line-height: 12px; color: #000; }
.ruler svg { position: absolute; inset: 0; width: 100%; height: 100%; }
.ruler-x { background: linear-gradient(#d8d8d8, #f4f4f4); border-bottom: 2px solid #000; }
.ruler-y { background: linear-gradient(90deg, #d8d8d8, #f4f4f4); border-right: 2px solid #000; }
.ruler-x span { position: absolute; top: 2px; width: 30px; margin-left: -15px; text-align: center; }
.ruler-y span { position: absolute; left: 3px; width: 7px; margin-top: 2px; word-break: break-all; transform: translateY(-50%); }
.canvas { position: relative; overflow: hidden; background: #fff; }
.gridlines { position: absolute; inset: 0; width: 100%; height: 100%; }
.shape { position: absolute; }
.band { left: 83px; right: 0; top: 14px; height: 40px; background: #999; border: solid #33cc33; border-width: 1px 0 1px 1px; }
.head-row { left: 81px; right: 0; top: 391px; height: 38px; background: #999; border: solid #33cc33; border-width: 1px 0 0 1px; }
.detail-row { left: 81px; right: 0; top: 428px; bottom: 0; background: #5cffdb; border-top: 1px solid #9a9a40; }
.cell-fill { left: 83px; top: 225px; width: 107px; height: 81px; background: #999; }
.rules { left: 83px; top: 225px; width: 300px; border: solid #0f0; border-width: 1px 1px 0; }
.rule-row { height: 26px; border-bottom: 1px solid #0f0; }
.rule-row-first { height: 28px; }
.rule-row::before { content: ""; display: block; width: 107px; height: 100%; border-right: 1px solid #0f0; }
.underline { left: 92px; top: 144px; width: 297px; height: 1px; background: #0f0; }

.ft { position: absolute; white-space: nowrap; text-align: justify; text-align-last: justify; font: 300 16px/20px "Noto Sans CJK JP", sans-serif; color: #fff; }
.fd { position: absolute; font: 300 16px/20px "Noto Sans CJK JP", sans-serif; font-feature-settings: "hwid"; color: #f00; }
.title { left: 471px; top: 14px; width: 200px; font-size: 35px; line-height: 40px; }
.client { left: 101px; top: 121px; font-size: 19px; }
.onchu { left: 343px; top: 120px; width: 43px; color: #00f; font-size: 17px; }
.lead { left: 83px; top: 182px; width: 331px; color: #00f; font-size: 18px; }
.lab { left: 85px; width: 102px; }
.lab-1 { top: 229px; } .lab-2 { top: 256px; } .lab-3 { top: 282px; }
.val { left: 245px; }
.val-1 { top: 229px; } .val-2 { top: 256px; } .val-3 { top: 282px; }
.col { top: 400px; }
.col-1 { left: 175px; width: 116px; }
.col-2 { left: 434px; width: 44px; }
.col-3 { left: 562px; width: 47px; }
.det { top: 440px; }
.det-1 { left: 102px; } .det-2 { left: 224px; } .det-3 { left: 457px; } .det-4 { left: 554px; }

.doc-tabs { display: flex; height: 19px; }
.doc-tab { height: 17px; padding: 0 9px; background: #b8cfe5; border: solid #7a8a99; border-width: 0 1px 1px; border-radius: 0 0 3px 3px; font-size: 11px; }
.doc-tab-on { height: 19px; padding: 0 11px; background: #c8ddf2; border-left-color: #c8ddf2; margin-right: 1px; }

.palette { display: flex; flex-direction: column; padding: 2px 0 0 4px; background: #f3f7fb; }
.palette button { flex: none; height: 24px; background: #eee; border: solid #7a8a99; border-width: 1px 0 0 1px; }
.palette .palette-long { flex-direction: column; justify-content: flex-start; gap: 6px; height: 148px; padding-top: 2px; border-bottom-width: 1px; }
.palette span { writing-mode: vertical-rl; text-orientation: sideways; font-size: 12px; line-height: 16px; }

/* Status bar */
.status { flex: none; display: flex; gap: 3px; height: 30px; }
.status-tools { position: relative; display: flex; gap: 5px; padding: 3px 1px 0 0; }
.status-tools button { width: 24px; height: 24px; border: 1px solid #a0a0a0; }
.status-fields { position: relative; flex: 1; display: flex; gap: 7px; padding: 3px 1px 4px 1px; }
.field { border: 1px solid #a0a0a0; box-shadow: inset 1px 1px #fff; }
.field-main { flex: 5; }
.field-end { flex: 2; }
```
FILE: ruler.js
```js
// Draws the ruler scales and the canvas grid. One unit is UNIT pixels.
const UNIT = 3.938;
const NS = 'http://www.w3.org/2000/svg';

function addPath(svg, d, color) {
  const path = document.createElementNS(NS, 'path');
  path.setAttribute('d', d);
  path.setAttribute('stroke', color);
  path.setAttribute('fill', 'none');
  svg.appendChild(path);
}

function ruler(id, horizontal) {
  const host = document.getElementById(id);
  const size = horizontal ? host.clientWidth : host.clientHeight;
  const svg = document.createElementNS(NS, 'svg');
  host.replaceChildren();
  let d = '';
  for (let n = 1; n * UNIT < size; n++) {
    const p = Math.floor(n * UNIT) + 0.5;
    const len = n % 10 === 0 ? 7 : n % 5 === 0 ? 5 : 3;
    d += horizontal ? `M${p} ${22 - len}V22` : `M${22 - len} ${p}H22`;
  }
  for (let n = 10; n * UNIT - 12 < size; n += 10) {
    const label = document.createElement('span');
    label.textContent = n;
    label.style[horizontal ? 'left' : 'top'] = Math.round(n * UNIT) + 'px';
    host.appendChild(label);
  }
  addPath(svg, d, '#000');
  host.appendChild(svg);
}

function draw() {
  ruler('rulerX', true);
  ruler('rulerY', false);
  const grid = document.getElementById('grid');
  const box = grid.parentElement;
  grid.replaceChildren();
  let lines = '';
  for (let n = 5; n * UNIT < Math.max(box.clientWidth, box.clientHeight); n += 5) {
    const p = Math.floor(n * UNIT) + 0.5;
    lines += `M${p} 0V${box.clientHeight}M0 ${p}H${box.clientWidth}`;
  }
  addPath(grid, lines, 'rgba(205,205,205,.5)');
}

draw();
window.addEventListener('resize', draw);
```
